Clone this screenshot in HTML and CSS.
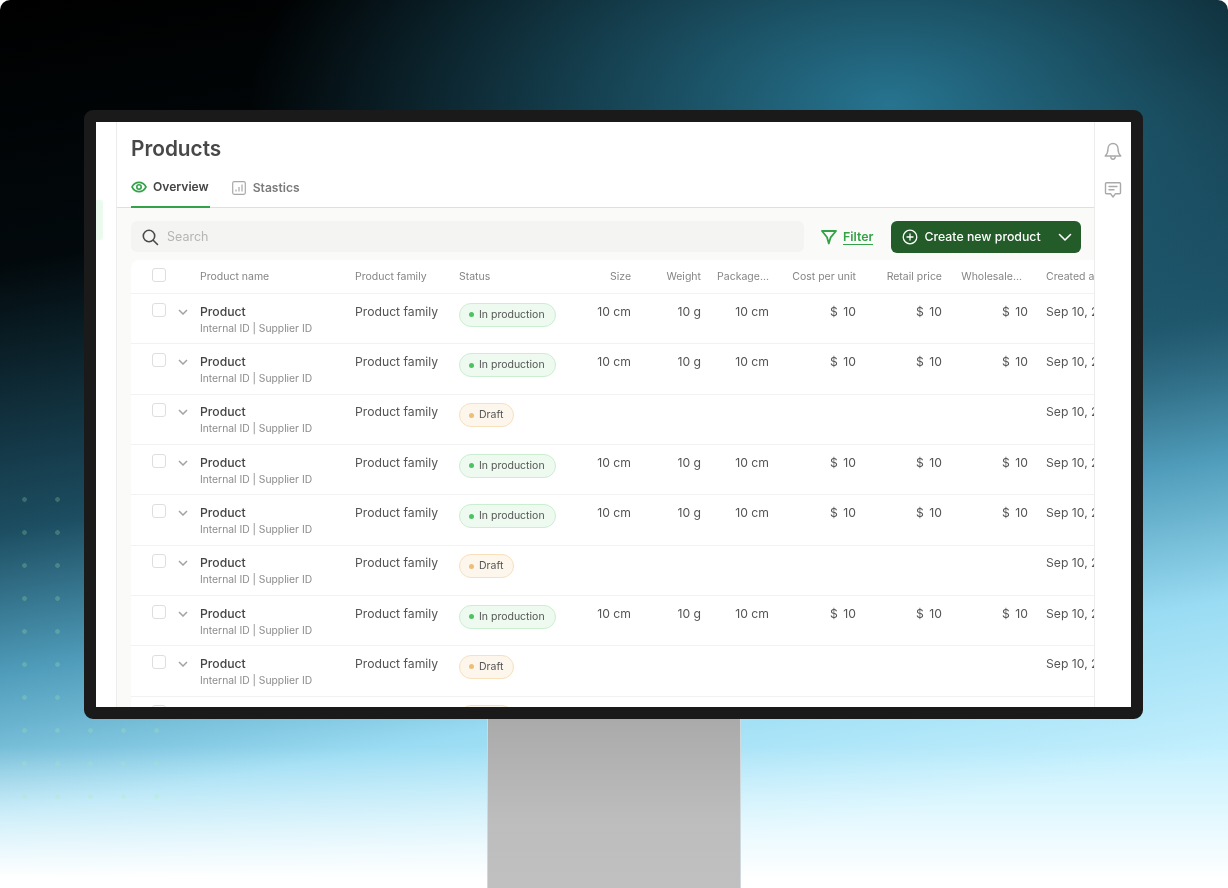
FILE: index.html
```html
<!DOCTYPE html>
<html lang="en">
<head>
  <meta charset="UTF-8">
  <title>Products</title>
  <link rel="stylesheet" href="styles.css">
</head>
<body>
  <div class="poster">
    <div class="dots"></div>
    <div class="monitor">
      <div class="screen">
        <div class="sidebar"><div class="nav-active"></div></div>
        <div class="main">
          <div class="header">
            <div class="title">Products</div>
            <div class="tabs">
              <div class="tab active">
                <svg width="16" height="16" viewBox="0 0 16 16" fill="none" stroke="#34a249" stroke-width="1.6"><path d="M1 8c1.6-3 4-4.6 7-4.6S13.400 5 15 8c-1.600 3-4 4.600-7 4.600S2.600 11 1 8z"/><circle cx="8" cy="8" r="2.200"/></svg>
                Overview
              </div>
              <div class="tab second">
                <svg width="14" height="14" viewBox="0 0 14 14" fill="none" stroke="#a8a8a8" stroke-width="1.200"><rect x="0.700" y="0.700" width="12.600" height="12.600" rx="1.500"/><path d="M4 10.500V8.500M7 10.500V6M10 10.500V3.500"/></svg>
                Stastics
              </div>
            </div>
          </div>
          <div class="content">
            <div class="toolbar">
              <div class="search">
                <svg width="18" height="18" viewBox="0 0 18 18" fill="none" stroke="#4a4a4a" stroke-width="1.600" stroke-linecap="round"><circle cx="8" cy="8" r="5.700"/><path d="M12.200 12.200l4.300 4.300"/></svg>
                <span>Search</span>
              </div>
              <div class="filter">
                <svg width="16" height="16" viewBox="0 0 16 16" fill="none" stroke="#34a249" stroke-width="1.800" stroke-linejoin="round"><path d="M1 2h14L9.700 8.300 7.800 14.500 6 8.300z"/></svg>
                <span>Filter</span>
              </div>
              <div class="create">
                <svg width="16" height="16" viewBox="0 0 16 16" fill="none" stroke="#fff" stroke-width="1.300" stroke-linecap="round"><circle cx="8" cy="8" r="6.800"/><path d="M8 5v6M5 8h6"/></svg>
                <span>Create new product</span>
                <svg class="create-arrow" width="14" height="14" viewBox="0 0 14 14" fill="none" stroke="#fff" stroke-width="1.600" stroke-linecap="round" stroke-linejoin="round"><path d="M1.500 4.500L7 10l5.500-5.500"/></svg>
              </div>
            </div>
            <div class="table">
              <div class="row head">
                <div class="cell-check"><i class="box"></i></div>
                <div>Product name</div>
                <div>Product family</div>
                <div>Status</div>
                <div class="num">Size</div>
                <div class="num">Weight</div>
                <div class="num">Package...</div>
                <div class="num">Cost per unit</div>
                <div class="num">Retail price</div>
                <div class="num short">Wholesale...</div>
                <div class="created">Created at</div>
              </div>

              <div class="row">
                <div class="cell-check"><i class="box"></i><svg class="chev" width="10" height="6" viewBox="0 0 10 6"><path d="M1 1l4 4 4-4" fill="none" stroke="#a5a2a0" stroke-width="1.500"/></svg></div>
                <div><div class="name">Product</div><div class="ids">Internal ID | Supplier ID</div></div>
                <div>Product family</div>
                <div><span class="badge ok"><i></i>In production</span></div>
                <div class="num">10 cm</div>
                <div class="num">10 g</div>
                <div class="num">10 cm</div>
                <div class="num money">$ 10</div>
                <div class="num money">$ 10</div>
                <div class="num money">$ 10</div>
                <div class="created">Sep 10, 2024</div>
              </div>

              <div class="row">
                <div class="cell-check"><i class="box"></i><svg class="chev" width="10" height="6" viewBox="0 0 10 6"><path d="M1 1l4 4 4-4" fill="none" stroke="#a5a2a0" stroke-width="1.500"/></svg></div>
                <div><div class="name">Product</div><div class="ids">Internal ID | Supplier ID</div></div>
                <div>Product family</div>
                <div><span class="badge ok"><i></i>In production</span></div>
                <div class="num">10 cm</div>
                <div class="num">10 g</div>
                <div class="num">10 cm</div>
                <div class="num money">$ 10</div>
                <div class="num money">$ 10</div>
                <div class="num money">$ 10</div>
                <div class="created">Sep 10, 2024</div>
              </div>

              <div class="row">
                <div class="cell-check"><i class="box"></i><svg class="chev" width="10" height="6" viewBox="0 0 10 6"><path d="M1 1l4 4 4-4" fill="none" stroke="#a5a2a0" stroke-width="1.500"/></svg></div>
                <div><div class="name">Product</div><div class="ids">Internal ID | Supplier ID</div></div>
                <div>Product family</div>
                <div><span class="badge draft"><i></i>Draft</span></div>
                <div class="num"></div>
                <div class="num"></div>
                <div class="num"></div>
                <div class="num"></div>
                <div class="num"></div>
                <div class="num"></div>
                <div class="created">Sep 10, 2024</div>
              </div>

              <div class="row">
                <div class="cell-check"><i class="box"></i><svg class="chev" width="10" height="6" viewBox="0 0 10 6"><path d="M1 1l4 4 4-4" fill="none" stroke="#a5a2a0" stroke-width="1.500"/></svg></div>
                <div><div class="name">Product</div><div class="ids">Internal ID | Supplier ID</div></div>
                <div>Product family</div>
                <div><span class="badge ok"><i></i>In production</span></div>
                <div class="num">10 cm</div>
                <div class="num">10 g</div>
                <div class="num">10 cm</div>
                <div class="num money">$ 10</div>
                <div class="num money">$ 10</div>
                <div class="num money">$ 10</div>
                <div class="created">Sep 10, 2024</div>
              </div>

              <div class="row">
                <div class="cell-check"><i class="box"></i><svg class="chev" width="10" height="6" viewBox="0 0 10 6"><path d="M1 1l4 4 4-4" fill="none" stroke="#a5a2a0" stroke-width="1.500"/></svg></div>
                <div><div class="name">Product</div><div class="ids">Internal ID | Supplier ID</div></div>
                <div>Product family</div>
                <div><span class="badge ok"><i></i>In production</span></div>
                <div class="num">10 cm</div>
                <div class="num">10 g</div>
                <div class="num">10 cm</div>
                <div class="num money">$ 10</div>
                <div class="num money">$ 10</div>
                <div class="num money">$ 10</div>
                <div class="created">Sep 10, 2024</div>
              </div>

              <div class="row">
                <div class="cell-check"><i class="box"></i><svg class="chev" width="10" height="6" viewBox="0 0 10 6"><path d="M1 1l4 4 4-4" fill="none" stroke="#a5a2a0" stroke-width="1.500"/></svg></div>
                <div><div class="name">Product</div><div class="ids">Internal ID | Supplier ID</div></div>
                <div>Product family</div>
                <div><span class="badge draft"><i></i>Draft</span></div>
                <div class="num"></div>
                <div class="num"></div>
                <div class="num"></div>
                <div class="num"></div>
                <div class="num"></div>
                <div class="num"></div>
                <div class="created">Sep 10, 2024</div>
              </div>

              <div class="row">
                <div class="cell-check"><i class="box"></i><svg class="chev" width="10" height="6" viewBox="0 0 10 6"><path d="M1 1l4 4 4-4" fill="none" stroke="#a5a2a0" stroke-width="1.500"/></svg></div>
                <div><div class="name">Product</div><div class="ids">Internal ID | Supplier ID</div></div>
                <div>Product family</div>
                <div><span class="badge ok"><i></i>In production</span></div>
                <div class="num">10 cm</div>
                <div class="num">10 g</div>
                <div class="num">10 cm</div>
                <div class="num money">$ 10</div>
                <div class="num money">$ 10</div>
                <div class="num money">$ 10</div>
                <div class="created">Sep 10, 2024</div>
              </div>

              <div class="row">
                <div class="cell-check"><i class="box"></i><svg class="chev" width="10" height="6" viewBox="0 0 10 6"><path d="M1 1l4 4 4-4" fill="none" stroke="#a5a2a0" stroke-width="1.500"/></svg></div>
                <div><div class="name">Product</div><div class="ids">Internal ID | Supplier ID</div></div>
                <div>Product family</div>
                <div><span class="badge draft"><i></i>Draft</span></div>
                <div class="num"></div>
                <div class="num"></div>
                <div class="num"></div>
                <div class="num"></div>
                <div class="num"></div>
                <div class="num"></div>
                <div class="created">Sep 10, 2024</div>
              </div>

              <div class="row">
                <div class="cell-check"><i class="box"></i><svg class="chev" width="10" height="6" viewBox="0 0 10 6"><path d="M1 1l4 4 4-4" fill="none" stroke="#a5a2a0" stroke-width="1.500"/></svg></div>
                <div><div class="name">Product</div><div class="ids">Internal ID | Supplier ID</div></div>
                <div>Product family</div>
                <div><span class="badge draft"><i></i>Draft</span></div>
                <div class="num"></div>
                <div class="num"></div>
                <div class="num"></div>
                <div class="num"></div>
                <div class="num"></div>
                <div class="num"></div>
                <div class="created">Sep 10, 2024</div>
              </div>
            </div>
          </div>
        </div>
        <div class="rail">
          <svg width="18" height="20" viewBox="0 0 18 20" fill="none" stroke="#a9a9a9" stroke-width="1.400" stroke-linejoin="round"><path d="M9 1.500c-3 0-5 2.300-5 5.300 0 3.700-.8 5.400-2.800 7.200h15.600c-2-1.800-2.800-3.500-2.800-7.200 0-3-2-5.300-5-5.300z"/><path d="M6.700 14.200c0 1.800 1 3 2.300 3s2.300-1.200 2.300-3"/></svg>
          <svg width="18" height="18" viewBox="0 0 18 18" fill="none" stroke="#a9a9a9" stroke-width="1.400" stroke-linejoin="round" stroke-linecap="round"><path d="M2.500 1.700h13c.6 0 1 .4 1 1v9c0 .6-.4 1-1 1h-4L9 16l-2.500-3.300h-4c-.6 0-1-.4-1-1v-9c0-.6.4-1 1-1z"/><path d="M5 5.500h8M5 8.800h5"/></svg>
        </div>
      </div>
    </div>
    <div class="stand"></div>
  </div>
</body>
</html>
```

FILE: styles.css
```css
* {
  box-sizing: border-box;
}
html, body {
  margin: 0;
  background: #fff;
}
body {
  font-family: Inter, "Liberation Sans", sans-serif;
  color: #4a4a4a;
}
.poster {
  position: relative;
  width: 1228px;
  height: 888px;
  padding: 110px 85px 0 84px;
  overflow: hidden;
  border-radius: 10px 10px 0 0;
  background:
    linear-gradient(180deg, rgba(255, 255, 255, 0) 84%, #fff 99%),
    radial-gradient(ellipse 640px 340px at 890px 105px, rgba(42, 125, 155, 0.92), rgba(42, 125, 155, 0) 100%),
    linear-gradient(170deg, #000 0%, #02090c 24%, #1c4d61 48%, #4f9cba 61%, #9adcf3 74%, #c4f0fe 88%);
}
.dots {
  position: absolute;
  left: 8px;
  top: 483px;
  width: 165px;
  height: 330px;
  background-image: radial-gradient(circle at center, rgba(170, 235, 170, 0.24) 2px, transparent 2.600px);
  background-size: 33px 33px;
}
.monitor {
  position: relative;
  height: 609px;
  border: 12px solid #1a1a1a;
  border-radius: 9px;
  background: #1a1a1a;
}
.stand {
  width: 254px;
  height: 169px;
  margin-left: 403px;
  border-left: 1px solid #cfd8dc;
  border-right: 1px solid #cfd8dc;
  background: linear-gradient(180deg, #aaaaaa, #bdbdbd 60%, #c0c0c0);
}
.screen {
  display: flex;
  height: 100%;
  background: #fff;
  overflow: hidden;
  filter: blur(0.3px);
}
.sidebar {
  width: 21px;
  flex: none;
  padding-top: 78px;
  border-right: 1px solid #ececec;
}
.nav-active {
  width: 7px;
  height: 40px;
  background: #eafaee;
  border-radius: 0 3px 3px 0;
}
.main {
  width: 977px;
  flex: none;
  overflow: hidden;
  background: #fafaf8;
}
.rail {
  flex: 1;
  padding-top: 20px;
  display: flex;
  flex-direction: column;
  align-items: center;
  gap: 19px;
  background: #fff;
  border-left: 1px solid #ececec;
}
.header {
  height: 86px;
  padding: 13px 14px 0;
  background: #fff;
  border-bottom: 1px solid #e2dedc;
}
.title {
  font-size: 20.800px;
  line-height: 27px;
  font-weight: 600;
  color: #484848;
}
.tabs {
  display: flex;
  gap: 22px;
  margin-top: 11px;
}
.tab {
  display: flex;
  align-items: center;
  gap: 6px;
  height: 35px;
  padding-bottom: 6px;
  font-size: 12.100px;
  font-weight: 600;
  color: #7a7a7a;
}
.tab.second {
  gap: 7px;
}
.tab.active {
  color: #444;
  border-bottom: 2px solid #34a249;
  padding-right: 1px;
}
.content {
  padding: 13px 0 0 14px;
}
.toolbar {
  display: flex;
  align-items: center;
  height: 31px;
  margin-bottom: 8px;
}
.search {
  display: flex;
  align-items: center;
  gap: 8px;
  width: 673px;
  height: 31px;
  padding-left: 10px;
  border-radius: 6px;
  background: #f4f4f2;
  font-size: 12.500px;
  color: #b5b5b3;
}
.filter {
  display: flex;
  align-items: center;
  gap: 6px;
  margin-left: 17px;
  font-size: 12.400px;
  font-weight: 600;
  color: #34a249;
}
.filter span {
  border-bottom: 1px solid #34a249;
}
.create {
  display: flex;
  align-items: center;
  gap: 6px;
  width: 190px;
  height: 32px;
  margin-left: 18px;
  padding: 0 9px 0 11px;
  border-radius: 6px;
  background: #235c29;
  font-size: 12.300px;
  font-weight: 500;
  color: #fff;
}
.create-arrow {
  margin-left: auto;
}
.table {
  width: 1100px;
  background: #fff;
  border-radius: 8px 0 0 0;
}
.row {
  display: grid;
  grid-template-columns: 69px 155px 104px 115px 57px 70px 68px 87px 86px 86px 118px;
  height: 50.330px;
  padding-top: 9.700px;
  border-bottom: 1px solid #f4f2f0;
  font-size: 12.200px;
  line-height: 16px;
  color: #555;
}
.row.head {
  height: 34px;
  padding-top: 9px;
  font-size: 10.500px;
  font-weight: 400;
  color: #858585;
}
.cell-check {
  display: flex;
  align-items: flex-start;
  gap: 12px;
  padding-left: 21px;
}
.box {
  width: 14px;
  height: 14px;
  flex: none;
  margin-top: -1px;
  border: 1px solid #e0dedc;
  border-radius: 3px;
  background: #fff;
}
.chev {
  margin-top: 5px;
}
.num {
  text-align: right;
}
.num.short {
  padding-right: 6px;
}
.money {
  word-spacing: 2px;
}
.created {
  padding-left: 18px;
  white-space: nowrap;
}
.name {
  font-weight: 500;
  color: #444;
}
.ids {
  font-size: 10.300px;
  line-height: 15px;
  margin-top: 1px;
  color: #8c8c8c;
}
.badge {
  display: inline-flex;
  align-items: center;
  gap: 5px;
  height: 24px;
  margin-top: -1px;
  padding: 0 10px 0 9px;
  border-radius: 12px;
  font-size: 10.500px;
  font-weight: 400;
  color: #555;
}
.badge i {
  width: 5px;
  height: 5px;
  border-radius: 50%;
}
.badge.ok {
  background: #eefaf0;
  border: 1px solid #c9efd0;
}
.badge.ok i {
  background: #4cc262;
}
.badge.draft {
  background: #fdf6ec;
  border: 1px solid #f8e0bd;
}
.badge.draft i {
  background: #edbe78;
}
```
